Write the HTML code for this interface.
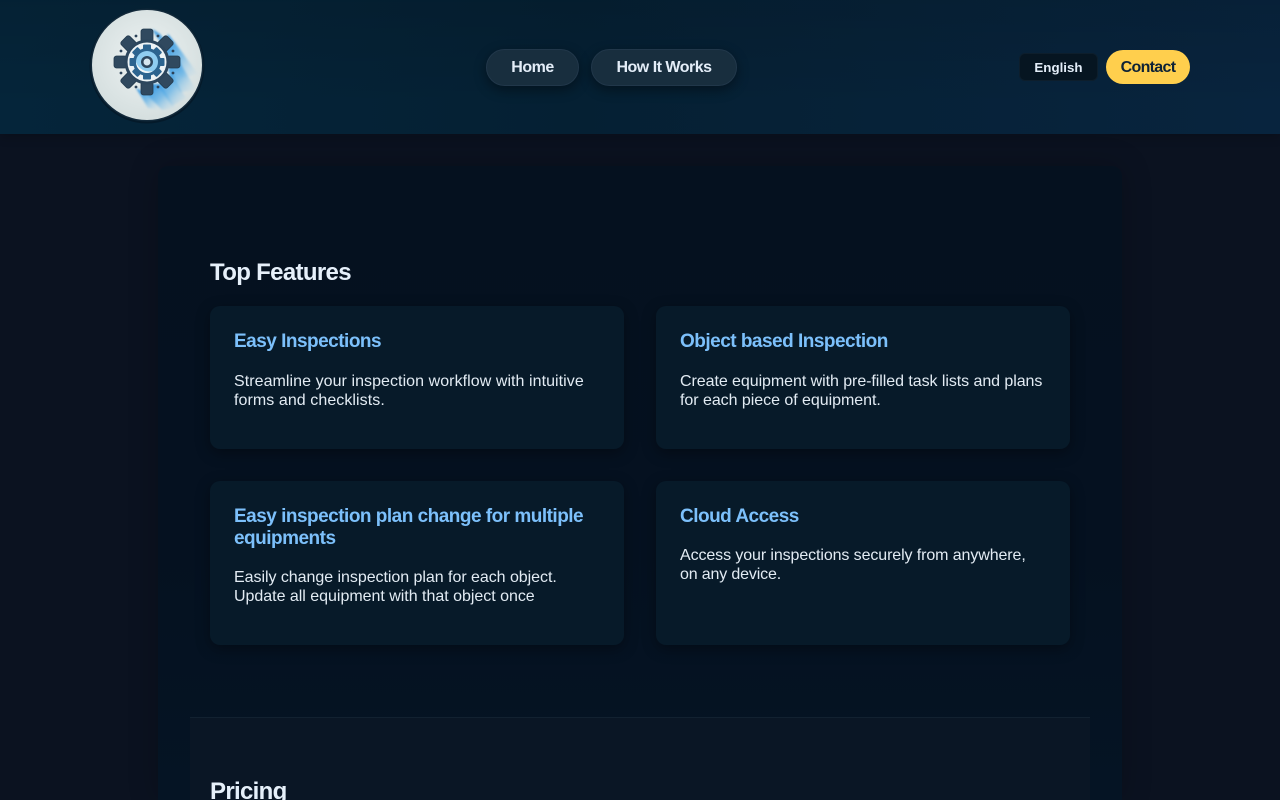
<!DOCTYPE html>
<html lang="en"><head><meta charset="utf-8"><title>Top Features</title>
<style>
*{box-sizing:border-box;margin:0;padding:0}
html,body{width:1280px;height:800px;overflow:hidden}
body{background:#0b1220;font-family:"Liberation Sans",Arial,sans-serif;position:relative;color:#e6eef6}
.abs{position:absolute;white-space:nowrap}
header{position:absolute;left:0;top:0;width:1280px;height:134px;background:linear-gradient(180deg,rgba(0,0,0,.1),rgba(0,0,0,0) 80%),linear-gradient(90deg,#05253a 0%,#052033 45%,#08243e 100%);box-shadow:0 3px 10px rgba(0,0,0,.2)}
.nav{position:absolute;top:49px;height:37px;border-radius:19px;background:#182e3e;border:1px solid #21374a;box-shadow:0 4px 12px rgba(0,0,0,.4);color:#e3edf8;font-weight:700;font-size:16px;line-height:36px;text-align:center;letter-spacing:-.5px}
.lang{position:absolute;left:1019px;top:53px;width:79px;height:28px;background:#061521;border:1px solid #0d1e2c;border-radius:6px;color:#e3edf8;font-weight:700;font-size:13.33px;line-height:27px;text-align:center}
.contact{position:absolute;left:1106px;top:50px;width:84px;height:34px;border-radius:17px;background:#ffcf4d;color:#0d2236;font-weight:700;font-size:16px;line-height:36px;text-align:center;letter-spacing:-.7px}
main{position:absolute;left:158px;top:166px;width:964px;height:634px;border-radius:10px 10px 0 0;background:linear-gradient(180deg,#05111f,#051120 60%,#051424);box-shadow:0 0 30px rgba(0,0,0,.22)}
.card{position:absolute;width:414px;background:#071a29;border-radius:10px;box-shadow:0 4px 14px rgba(0,0,0,.35)}
h2{position:absolute;font-size:24px;line-height:28px;font-weight:700;color:#e6f0fa;white-space:nowrap;letter-spacing:-.67px}
h3{position:absolute;left:234px;font-size:19px;line-height:22px;font-weight:700;color:#7cc0fb;white-space:nowrap;letter-spacing:-.51px}
p{position:absolute;font-size:16px;line-height:19px;color:#e2ebf3;white-space:nowrap}
.pricing{position:absolute;left:190px;top:717px;width:900px;height:83px;background:#0a1625;border-top:1px solid #122130}
</style></head><body>
<header></header>
<svg class="abs" style="left:80px;top:0" width="134" height="130" viewBox="80 0 134 130">
<defs>
<radialGradient id="d" cx="50%" cy="45%" r="55%"><stop offset="0" stop-color="#eef3f3"/><stop offset="1" stop-color="#d5dfdf"/></radialGradient>
<linearGradient id="s" x1="0" y1="0" x2="1" y2="1"><stop offset="0" stop-color="#1f8be0"/><stop offset=".5" stop-color="#5fb0e6" stop-opacity=".75"/><stop offset="1" stop-color="#bfdcec" stop-opacity="0"/></linearGradient>
<filter id="b"><feGaussianBlur stdDeviation="1"/></filter>
</defs>
<circle cx="147" cy="66" r="57.500" fill="#04131f" opacity=".55"/>
<circle cx="147" cy="65" r="56.500" fill="#12293a"/>
<circle cx="147" cy="65" r="55" fill="url(#d)"/>
<g filter="url(#b)" fill="url(#s)">
<path d="M152 29 L160 34 L178 56 L170 58 Z"/>
<path d="M168 34 L176 44 L198 74 L182 78 L164 50 Z"/>
<path d="M178 56 L182 66 L196 90 L180 92 L168 70 Z"/>
<path d="M172 72 L176 82 L186 98 L172 106 L158 86 Z"/>
<path d="M152 84 L160 84 L176 108 L162 110 L148 96 Z"/>
<path d="M136 88 L148 94 L160 110 L148 108 Z"/>
</g>
<g fill="#30495f" stroke="#223a4e" stroke-width=".8">
<rect x="141" y="29" width="12" height="13" rx="2.500"/>
<rect x="141" y="29.500" width="12" height="13" rx="2.500" transform="rotate(45 147 62)"/>
<rect x="141" y="29" width="12" height="13" rx="2.500" transform="rotate(90 147 62)"/>
<rect x="141" y="29.500" width="12" height="13" rx="2.500" transform="rotate(135 147 62)"/>
<rect x="141" y="29" width="12" height="13" rx="2.500" transform="rotate(180 147 62)"/>
<rect x="141" y="29.500" width="12" height="13" rx="2.500" transform="rotate(225 147 62)"/>
<rect x="141" y="29" width="12" height="13" rx="2.500" transform="rotate(270 147 62)"/>
<rect x="141" y="29.500" width="12" height="13" rx="2.500" transform="rotate(315 147 62)"/>
</g>
<circle cx="147" cy="62" r="22.500" fill="#2c465d"/>
<circle cx="147" cy="62" r="19.500" fill="#edf3f5"/>
<g fill="#2c648f">
<rect x="143" y="44.500" width="8" height="35" rx="1"/>
<rect x="143" y="44.500" width="8" height="35" rx="1" transform="rotate(45 147 62)"/>
<rect x="143" y="44.500" width="8" height="35" rx="1" transform="rotate(90 147 62)"/>
<rect x="143" y="44.500" width="8" height="35" rx="1" transform="rotate(135 147 62)"/>
</g>
<circle cx="147" cy="62" r="14" fill="#2c648f"/>
<circle cx="147" cy="62" r="11" fill="#8fcdf0"/>
<path d="M136 62a11 11 0 0 0 11 11a11 11 0 0 0 6-2a14 14 0 0 1-17-9z" fill="#f1f6f7"/>
<circle cx="147" cy="62" r="6" fill="#2c465d"/>
<circle cx="147" cy="62" r="3.500" fill="#d5e6ef"/>
<g fill="#2b4259"><circle cx="136" cy="36" r="1.400"/><circle cx="158" cy="36" r="1.400"/><circle cx="121" cy="51" r="1.400"/><circle cx="173" cy="51" r="1.400"/><circle cx="121" cy="73" r="1.400"/><circle cx="173" cy="73" r="1.400"/><circle cx="136" cy="87" r="1.400"/><circle cx="158" cy="87" r="1.400"/></g>
</svg>
<div class="nav" style="left:486px;width:93px">Home</div>
<div class="nav" style="left:591px;width:146px">How It Works</div>
<div class="lang">English</div>
<div class="contact">Contact</div>
<main></main>
<h2 style="left:210px;top:259px">Top Features</h2>
<div class="card" style="left:210px;top:306px;height:143px"></div>
<div class="card" style="left:656px;top:306px;height:143px"></div>
<div class="card" style="left:210px;top:481px;height:164px"></div>
<div class="card" style="left:656px;top:481px;height:164px"></div>
<h3 style="top:331px">Easy Inspections</h3>
<p style="left:234px;top:372px"><span style="letter-spacing:.06px">Streamline your inspection workflow with intuitive</span><br><span style="letter-spacing:.07px">forms and checklists.</span></p>
<h3 style="left:680px;top:331px">Object based Inspection</h3>
<p style="left:680px;top:372px"><span style="letter-spacing:-.06px">Create equipment with pre-filled task lists and plans</span><br><span style="letter-spacing:-.04px">for each piece of equipment.</span></p>
<h3 style="top:506px">Easy inspection plan change for multiple<br>equipments</h3>
<p style="left:234px;top:568px"><span style="letter-spacing:-.04px">Easily change inspection plan for each object.</span><br><span style="letter-spacing:-.02px">Update all equipment with that object once</span></p>
<h3 style="left:680px;top:506px">Cloud Access</h3>
<p style="left:680px;top:546px"><span style="letter-spacing:-.1px">Access your inspections securely from anywhere,</span><br><span style="letter-spacing:-.15px">on any device.</span></p>
<div class="pricing"></div>
<h2 style="left:210px;top:778px;height:22px;overflow:hidden">Pricing</h2>
</body></html>
